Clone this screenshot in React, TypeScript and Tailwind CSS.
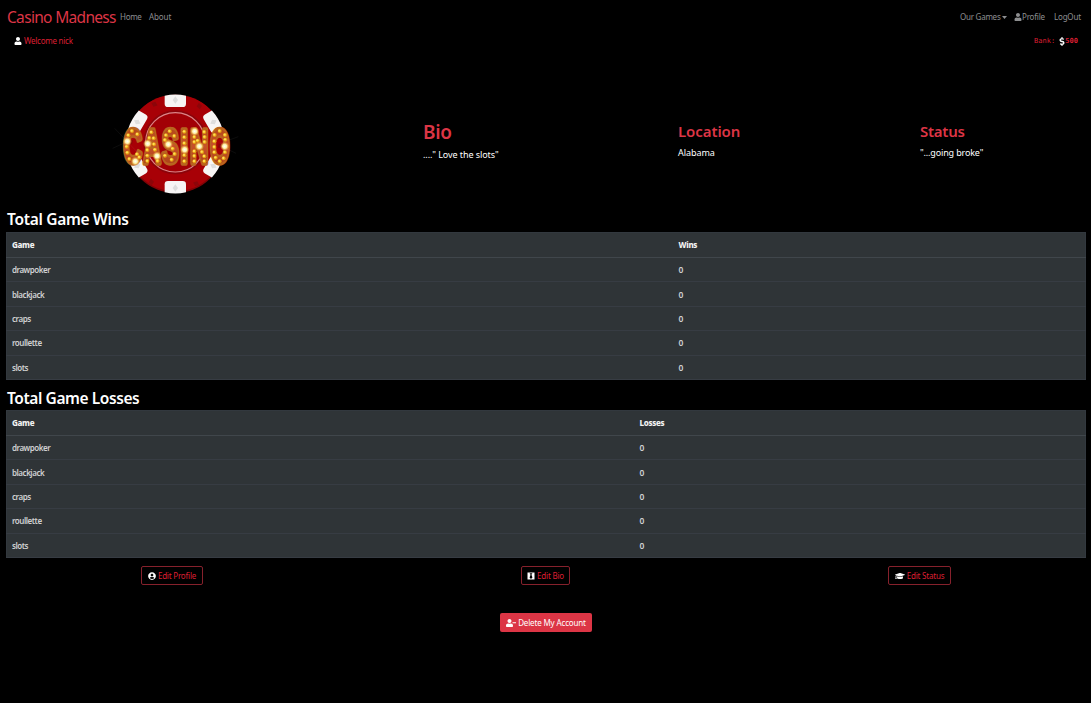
import { FaUser, FaUserCircle, FaDollarSign, FaGraduationCap, FaUserMinus, FaBlackTie } from "react-icons/fa";

const games = ["drawpoker", "blackjack", "craps", "roullette", "slots"];

const letters: { c: string; x: number; sx: number }[] = [
  { c: "C", x: 40, sx: 0.54 },
  { c: "A", x: 100, sx: 0.51 },
  { c: "S", x: 155, sx: 0.53 },
  { c: "I", x: 211, sx: 0.58 },
  { c: "N", x: 240, sx: 0.53 },
  { c: "O", x: 300, sx: 0.52 },
];

const bulbs: [number, number][] = [
  [66, 138], [82, 148], [55, 151], [50, 185], [52, 203], [58, 222], [81, 208], [88, 217],
  [124, 142], [118, 159], [131, 160], [132, 178], [112, 195], [135, 194], [112, 212], [112, 228], [143, 228],
  [179, 139], [193, 153], [168, 151], [165, 165], [188, 191], [194, 207], [185, 224], [165, 212],
  [223, 140], [223, 157], [223, 175], [223, 211], [223, 229],
  [253, 156], [253, 171], [253, 199], [253, 213], [253, 229], [263, 167], [276, 201], [283, 141], [284, 156], [284, 171], [283, 214], [283, 229],
  [329, 138], [314, 150], [345, 150], [346, 164], [313, 169], [313, 186], [313, 202], [345, 202], [317, 218], [341, 220], [329, 229],
];

const flares: [number, number][] = [
  [52, 169], [76, 229], [113, 176], [141, 213], [175, 178], [224, 194], [254, 139], [268, 184], [344, 184],
];

function Chip() {
  return (
    <svg viewBox="0 0 390 345" className="h-[115px] w-[130px] shrink-0">
      <defs>
        <radialGradient id="flare">
          <stop offset="0" stopColor="#fff" />
          <stop offset=".45" stopColor="#fff2a8" />
          <stop offset="1" stopColor="#ffb52b" stopOpacity="0" />
        </radialGradient>
        <linearGradient id="gold" x1="0" y1="0" x2="0" y2="1">
          <stop offset="0" stopColor="#a8430f" />
          <stop offset=".5" stopColor="#c8502a" />
          <stop offset="1" stopColor="#a03a10" />
        </linearGradient>
      </defs>
      <circle cx="196" cy="177" r="147" fill="#800306" />
      <circle cx="196" cy="174" r="145" fill="#a80006" />
      {[0, 60, 120, 180, 240, 300].map((a) => (
        <g key={a} transform={`rotate(${a} 196 177)`}>
          <path d="M164 32Q196 25 228 32V56Q228 66 218 66H174Q164 66 164 56Z" fill="#f7f5f5" />
          <path d="M196 34L204 45L196 56L188 45Z" fill="#dedede" />
          <path d="M268 53L276 63L268 73L260 63Z" transform="rotate(-8 268 63)" fill="#8c0509" />
        </g>
      ))}
      <circle cx="196" cy="172" r="96" fill="#8b040a" />
      <circle cx="196" cy="172" r="89" fill="#a20006" stroke="#dc8588" strokeWidth="3.5" />
      {letters.map((l) => (
        <text
          key={l.c}
          transform={`translate(${l.x} 233) scale(${l.sx} 1)`}
          fontFamily="Liberation Sans, sans-serif"
          fontWeight="700"
          fontSize="145"
          fill="url(#gold)"
          stroke="#b8641f"
          strokeWidth="16"
          strokeLinejoin="round"
          paintOrder="stroke"
        >
          {l.c}
        </text>
      ))}
      {bulbs.map(([x, y]) => (
        <g key={`${x}-${y}`}>
          <circle cx={x} cy={y} r="6" fill="#e49b13" />
          <circle cx={x - 1} cy={y - 1} r="3.5" fill="#ffe052" />
        </g>
      ))}
      {flares.map(([x, y]) => (
        <circle key={`${x}-${y}`} cx={x} cy={y} r="14" fill="url(#flare)" />
      ))}
      <path d="M14 130L88 208M8 190L90 152M330 175L385 155M335 184L378 205" stroke="#fff" strokeOpacity=".08" strokeWidth="2" />
    </svg>
  );
}

function GameTable({ label, first }: { label: string; first: string }) {
  return (
    <table className="w-full table-fixed border-collapse border border-[#32383e] bg-[#2f3437] text-left text-[8px] leading-[12px] text-[#d0d1d2]">
      <colgroup>
        <col className={first} />
        <col />
      </colgroup>
      <thead>
        <tr className="h-[25px] border-b border-[#40464b] text-[#f2f2f2]">
          <th className="px-[5px] py-0 font-extrabold tracking-[-0.32px]">Game</th>
          <th className="px-[5px] py-0 font-extrabold tracking-[-0.3px]">{label}</th>
        </tr>
      </thead>
      <tbody>
        {games.map((g) => (
          <tr key={g} className="h-[24.4px] border-b border-[#373c43]">
            <td className="px-[5px] pt-px pb-0 font-semibold tracking-[-0.46px]">{g}</td>
            <td className="px-[5px] pt-px pb-0 text-[8.5px] font-semibold">0</td>
          </tr>
        ))}
      </tbody>
    </table>
  );
}

const outline = "flex h-[19px] items-center justify-center gap-[2px] rounded-[2px] border border-[#86212c] text-[8px] tracking-[-0.2px] whitespace-nowrap text-[#dc1f32]";

export default function App() {
  return (
    <div className="h-[703px] w-full overflow-hidden bg-black font-['Noto_Sans','Open_Sans',sans-serif] text-white">
      <nav className="flex h-[34px] items-center pr-[10px] pl-[7px] text-[8px] whitespace-nowrap text-[#8d8e90]">
        <span className="w-[113px] text-[15.5px] leading-[24px] tracking-[-0.68px] text-[#dc3545]">Casino Madness</span>
        <span className="w-[29px] tracking-[-0.3px]">Home</span>
        <span className="tracking-[-0.1px]">About</span>
        <span className="ml-auto flex w-[54px] items-center tracking-[-0.25px]">
          Our Games
          <svg viewBox="0 0 5 3" className="ml-[2px] h-[3px] w-[5px] fill-current">
            <path d="M0 0H5L2.5 3Z" />
          </svg>
        </span>
        <span className="flex w-[40px] items-center tracking-[-0.2px]">
          <FaUser className="size-[8px]" />
          Profile
        </span>
        <span className="w-[27px] tracking-[-0.2px]">LogOut</span>
      </nav>
      <div className="flex h-[14px] items-center justify-between pr-[13px] pl-[14px] text-[8px] whitespace-nowrap text-[#dc1f32]">
        <span className="flex items-center gap-[2px] tracking-[-0.25px]">
          <FaUser className="size-[8px] text-white" />
          Welcome nick
        </span>
        <span className="flex items-center font-['DejaVu_Sans_Mono',monospace] text-[7px] tracking-[0.05px]">
          <span className="mr-[4px]">Bank:</span>
          <FaDollarSign className="h-[9px] w-[6px] text-white" />
          <span className="font-bold">500</span>
        </span>
      </div>
      <section className="flex h-[162px] items-start pt-[37px] pl-[110px] whitespace-nowrap">
        <Chip />
        <div className="ml-[183px] w-[255px] pt-[35px]">
          <h2 className="text-[19px] leading-[24px] font-semibold tracking-[-0.3px] text-[#dc3545]">Bio</h2>
          <p className="mt-[4px] text-[9px] leading-[13px] tracking-[-0.08px]">....&quot; Love the slots&quot;</p>
        </div>
        <div className="w-[242px] pt-[36px]">
          <h3 className="text-[15px] leading-[20px] font-semibold tracking-[-0.08px] text-[#dc3545]">Location</h3>
          <p className="mt-[5px] text-[9px] leading-[13px] tracking-[-0.05px]">Alabama</p>
        </div>
        <div className="pt-[36px]">
          <h3 className="text-[15px] leading-[20px] font-semibold tracking-[-0.25px] text-[#dc3545]">Status</h3>
          <p className="mt-[5px] text-[9px] leading-[13px] tracking-[-0.15px]">&quot;...going broke&quot;</p>
        </div>
      </section>
      <main className="pr-[5px] pl-[6px]">
        <h3 className="h-[22px] pl-px text-[15.5px] leading-[18px] font-semibold tracking-[-0.3px]">Total Game Wins</h3>
        <div className="h-[157px]">
          <GameTable label="Wins" first="w-[667px]" />
        </div>
        <h3 className="h-[21px] pl-px text-[15.5px] leading-[18px] font-semibold tracking-[-0.42px]">Total Game Losses</h3>
        <div className="h-[156px]">
          <GameTable label="Losses" first="w-[628px]" />
        </div>
      </main>
      <div className="flex pl-[141px]">
        <button className={`${outline} w-[62px]`}>
          <FaUserCircle className="size-[8px] text-white" />
          Edit Profile
        </button>
        <button className={`${outline} ml-[318px] w-[49px]`}>
          <FaBlackTie className="size-[8px] text-white" />
          Edit Bio
        </button>
        <button className={`${outline} ml-[318px] w-[63px]`}>
          <FaGraduationCap className="size-[10px] text-white" />
          Edit Status
        </button>
      </div>
      <button className="mt-[28px] ml-[500px] flex h-[19px] w-[92px] items-center justify-center gap-[2px] rounded-[2px] bg-[#dc3545] text-[8px] tracking-[-0.15px] whitespace-nowrap">
        <FaUserMinus className="size-[10px]" />
        Delete My Account
      </button>
    </div>
  );
}
